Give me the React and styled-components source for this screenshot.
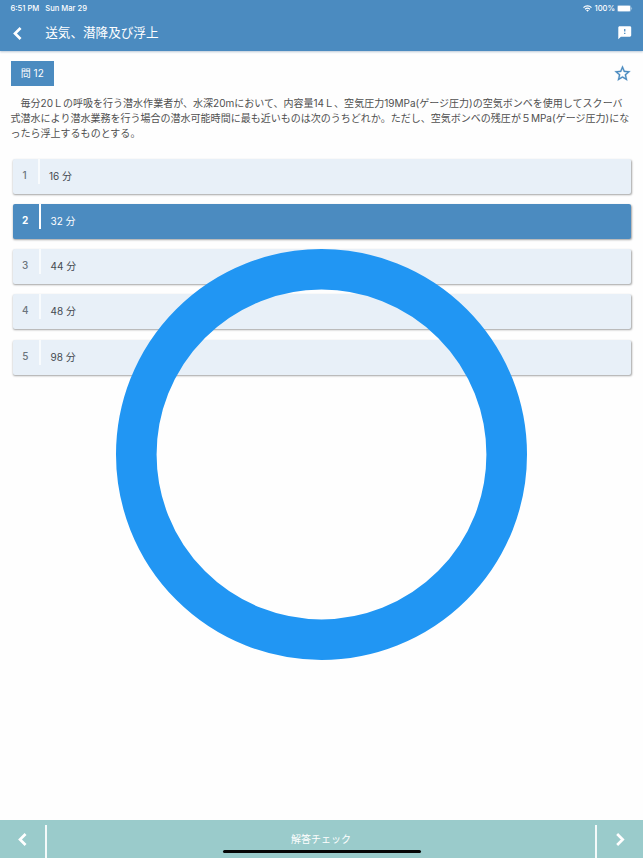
import React from 'react'
import styled, { createGlobalStyle } from 'styled-components'

const BLUE = '#4b8bc0'

const GlobalStyle = createGlobalStyle`
    * {
        box-sizing: border-box;
    }

    body {
        margin: 0;
        background: #fefefe;
        font-family: Inter, "Noto Sans CJK JP", sans-serif;
        color: #505050;
        overflow: hidden;
    }

    svg {
        display: block;
    }
`

const Screen = styled.div`
    position: relative;
    display: flex;
    flex-direction: column;
    width: 643px;
    height: 858px;
`

const Header = styled.header`
    height: 50.5px;
    flex: none;
    background: ${BLUE};
    color: #fff;
    box-shadow: 0 1px 2px rgba(60, 100, 140, 0.35);
`

const StatusBar = styled.div`
    display: flex;
    align-items: center;
    height: 16px;
    padding: 0 10px 0 10.5px;
    font-size: 7.6px;
    font-weight: 500;
    white-space: pre;
`

const StatusDate = styled.span`
    margin-left: 6px;
    flex: 1;
`

const Percent = styled.span`
    margin: 0 2px 0 3px;
`

const TitleBar = styled.div`
    display: flex;
    align-items: center;
    height: 34px;
    padding: 0 10.5px 0 12px;
`

const Title = styled.h1`
    flex: 1;
    margin: 0 0 0 22.5px;
    font-size: 12.6px;
    line-height: 20px;
    font-weight: 400;
`

const Body = styled.main`
    flex: 1;
    padding: 10px 12px 0 10.5px;
`

const QuestionHead = styled.div`
    display: flex;
    justify-content: space-between;
    align-items: center;
    height: 25px;
    margin-right: -1px;
`

const QuestionNumber = styled.div`
    width: 43.5px;
    height: 25px;
    line-height: 25px;
    background: ${BLUE};
    color: #fff;
    font-size: 10px;
    text-align: center;
`

const Question = styled.p`
    margin: 10.5px 0 0;
    font-size: 10.03px;
    line-height: 15px;
    white-space: nowrap;
`

const Line = styled.span`
    display: block;
    width: max-content;
`

const Choices = styled.div`
    display: flex;
    flex-direction: column;
    gap: 10.3px;
    margin: 17.5px 0 0 2px;
`

const Choice = styled.div`
    display: flex;
    height: 35px;
    border-radius: 2px;
    background: ${props => props.$selected ? BLUE : '#e8f0f8'};
    color: ${props => props.$selected ? '#fff' : '#444a50'};
    box-shadow: 0.5px 1px 2px rgba(0, 0, 0, 0.36);
`

const ChoiceNumber = styled.div`
    width: ${props => props.$narrow ? 27 : 28.5}px;
    height: 25px;
    padding-right: 1px;
    border-right: 2px solid ${props => props.$selected ? '#fff' : '#f8fbfd'};
    font-size: 10px;
    font-weight: ${props => props.$selected ? 700 : 500};
    line-height: 32px;
    text-align: center;
    color: ${props => props.$selected ? '#fff' : '#6b747c'};
`

const ChoiceText = styled.div`
    padding-left: 9.5px;
    font-size: 10px;
    line-height: 35.5px;
`

const ResultMark = styled.svg`
    position: absolute;
    left: 116px;
    top: 248.5px;
`

const Footer = styled.footer`
    position: relative;
    display: flex;
    flex: none;
    height: 38px;
    padding-top: 5px;
    background: #9acbcb;
    color: #fff;
`

const NavButton = styled.div`
    display: flex;
    justify-content: center;
    width: ${props => props.$wide ? 46 : 45}px;
    padding-top: 7px;
`

const CheckButton = styled.div`
    flex: 1;
    border: solid #f4fafa;
    border-width: 0 2px;
    font-size: 10px;
    line-height: 28px;
    text-align: center;
`

const HomeIndicator = styled.div`
    position: absolute;
    left: 222.5px;
    bottom: 5px;
    width: 198px;
    height: 3.5px;
    border-radius: 2px;
    background: #050505;
`

const Chevron = ({ right, size = 14 }) => (
    <svg width={size * 10 / 14} height={size} viewBox='0 0 10 14' fill='none' stroke='#fff' strokeWidth='2.5'>
        <path d={right ? 'M2 1.8L7.2 7 2 12.2' : 'M8 1.8L2.8 7 8 12.2'} />
    </svg>
)

const WifiIcon = () => (
    <svg width='9' height='7' viewBox='0 0 18 14' fill='none' stroke='#fff' strokeWidth='2.6'>
        <path d='M1 5.2C5.5.8 12.5.8 17 5.2M4.2 8.4c2.7-2.5 6.9-2.5 9.6 0' />
        <path d='M6.2 10.6c1.6-1.4 4-1.4 5.6 0L9 13.5z' fill='#fff' stroke='none' />
    </svg>
)

const BatteryIcon = () => (
    <svg width='16' height='7' viewBox='0 0 16 7'>
        <rect x='.25' y='.25' width='13.5' height='6.5' rx='1.8' fill='none' stroke='#fff' strokeOpacity='.6' strokeWidth='.5' />
        <rect x='.8' y='.8' width='12.4' height='5.4' rx='1.3' fill='#fff' />
        <path d='M14.5 2.3c.8.3.8 2.1 0 2.4z' fill='#fff' opacity='.7' />
    </svg>
)

const FeedbackIcon = () => (
    <svg width='15.5' height='15.5' viewBox='0 0 24 24' fill='#fff'>
        <path d='M20 2H4c-1.1 0-1.99.9-1.99 2L2 22l4-4h14c1.1 0 2-.9 2-2V4c0-1.1-.9-2-2-2zm-7 12h-2v-2h2v2zm0-4h-2V6h2v4z' />
    </svg>
)

const StarIcon = () => (
    <svg width='19' height='19' viewBox='0 0 24 24' fill={BLUE} stroke={BLUE} strokeWidth='.3'>
        <path d='M22 9.24l-7.19-.62L12 2 9.19 8.63 2 9.24l5.46 4.73L5.82 21 12 17.27 18.18 21l-1.63-7.03L22 9.24zM12 15.4l-3.76 2.27 1-4.28-3.32-2.88 4.38-.38L12 6.1l1.71 4.04 4.38.38-3.32 2.88 1 4.28L12 15.4z' />
    </svg>
)

const choices = ['16 分', '32 分', '44 分', '48 分', '98 分']

const App = () => {
    const selected = 1

    const renderChoices = () => choices.map((text, i) => (
        <Choice key={i} $selected={i === selected}>
            <ChoiceNumber $selected={i === selected} $narrow={i === 0}>{i + 1}</ChoiceNumber>
            <ChoiceText>{text}</ChoiceText>
        </Choice>
    ))

    return (
        <Screen lang='ja'>
            <GlobalStyle />
            <Header>
                <StatusBar>
                    <span>6:51 PM</span>
                    <StatusDate>Sun Mar 29</StatusDate>
                    <WifiIcon />
                    <Percent>100%</Percent>
                    <BatteryIcon />
                </StatusBar>
                <TitleBar>
                    <Chevron size={15} />
                    <Title>送気、潜降及び浮上</Title>
                    <FeedbackIcon />
                </TitleBar>
            </Header>

            <Body>
                <QuestionHead>
                    <QuestionNumber>問 12</QuestionNumber>
                    <StarIcon />
                </QuestionHead>
                <Question>
                    <Line>　毎分20Ｌの呼吸を行う潜水作業者が、水深20mにおいて、内容量14Ｌ、空気圧力19MPa(ゲージ圧力)の空気ボンベを使用してスクーバ</Line>
                    <Line>式潜水により潜水業務を行う場合の潜水可能時間に最も近いものは次のうちどれか。ただし、空気ボンベの残圧が５MPa(ゲージ圧力)にな</Line>
                    <Line>ったら浮上するものとする。</Line>
                </Question>
                <Choices>{renderChoices()}</Choices>
            </Body>

            <Footer>
                <NavButton><Chevron size={15} /></NavButton>
                <CheckButton>解答チェック</CheckButton>
                <NavButton $wide><Chevron right size={15} /></NavButton>
                <HomeIndicator />
            </Footer>

            <ResultMark width='411' height='411' viewBox='0 0 411 411'>
                <circle cx='205.5' cy='205.5' r='185.2' fill='none' stroke='#2196f3' strokeWidth='40.6' />
            </ResultMark>
        </Screen>
    )
}

export default App
